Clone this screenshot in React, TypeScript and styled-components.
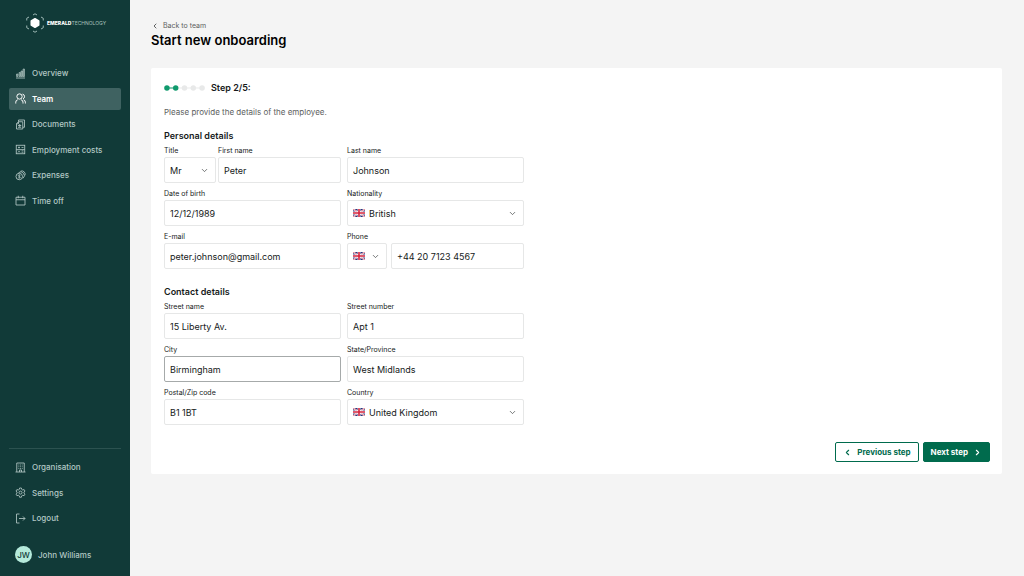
import React, { useId, useState } from "react";
import styled, { createGlobalStyle, css } from "styled-components";
import { ChevronDown, ChevronLeft, ChevronRight } from "lucide-react";

const color = {
  sidebar: "#113a38",
  active: "#3f6261",
  sidebarText: "#b3c8c5",
  page: "#f4f4f4",
  ink: "#161a1a",
  muted: "#5d6160",
  line: "#e6e7e7",
  lineFocus: "#a6aaaa",
  green: "#006b4d",
  stepOn: "#119a6d",
  stepOff: "#e8e9e9",
};

const GlobalStyle = createGlobalStyle`
  * { box-sizing: border-box; }
  body {
    margin: 0;
    background: ${color.page};
    color: ${color.ink};
    font-family: Inter, "Liberation Sans", sans-serif;
    font-size: 8px;
  }
  button, input, select { font: inherit; color: inherit; }
`;

const Shell = styled.div`
  display: flex;
  min-height: 100vh;
`;

/* ---------- Sidebar ---------- */

const Sidebar = styled.aside`
  display: flex;
  flex-direction: column;
  flex: none;
  width: 130px;
  padding: 12px 9px;
  background: ${color.sidebar};
  color: ${color.sidebarText};
`;

const Brand = styled.a`
  display: flex;
  align-items: center;
  gap: 2px;
  height: 22px;
  margin: 0 0 28px 16px;
  color: #a9c0bd;
  font-size: 5px;
  line-height: 8px;
  text-decoration: none;

  b { color: #fff; font-weight: 800; }
  svg { flex: none; }
`;

const NavList = styled.ul<{ $height: number }>`
  display: flex;
  flex-direction: column;
  justify-content: space-between;
  min-height: ${(p) => p.$height}px;
  margin: 0;
  padding: 0;
  list-style: none;
`;

const NavLink = styled.a<{ $active?: boolean }>`
  display: flex;
  align-items: center;
  gap: 6px;
  height: 22px;
  padding: 0 6px;
  border-radius: 2px;
  color: inherit;
  font-weight: 500;
  line-height: 12px;
  text-decoration: none;

  ${(p) =>
    p.$active &&
    css`
      background: ${color.active};
      color: #fff;
      font-weight: 600;
    `}
`;

const SidebarFoot = styled.div`
  margin-top: auto;
  padding-top: 7px;
  border-top: 1px solid #2c5250;
`;

const User = styled.div`
  display: flex;
  align-items: center;
  gap: 6px;
  margin: 17px 0 1px;
  padding-left: 6px;
  font-weight: 500;
`;

const Avatar = styled.span`
  display: grid;
  place-items: center;
  width: 17px;
  height: 17px;
  border-radius: 50%;
  background: #b5eadb;
  color: ${color.sidebar};
`;

/* ---------- Page ---------- */

const Main = styled.main`
  flex: 1;
  min-width: 0;
  padding: 20px 22px 24px 21px;
`;

const BackLink = styled.a`
  display: inline-flex;
  align-items: center;
  gap: 4px;
  height: 12px;
  color: ${color.muted};
  font-size: 7px;
  line-height: 12px;
  text-decoration: none;

  svg { color: ${color.ink}; }
`;

const Title = styled.h1`
  margin: 0 0 19px;
  color: #000;
  font-size: 13px;
  font-weight: 600;
  line-height: 17px;
`;

const Card = styled.form`
  padding: 13px 12px 12px 13px;
  border-radius: 2px;
  background: #fff;
`;

const StepBar = styled.div`
  display: flex;
  align-items: center;
  gap: 6px;
  height: 13px;
  font-size: 9px;
  font-weight: 600;
`;

const Intro = styled.p`
  margin: 12px 0;
  color: ${color.muted};
  line-height: 12px;
`;

const Section = styled.fieldset`
  max-width: 360px;
  min-width: 0;
  margin: 0 0 17px;
  padding: 0;
  border: 0;
`;

const Legend = styled.legend`
  height: 16px;
  padding: 0;
  font-size: 9px;
  font-weight: 600;
  line-height: 12px;
`;

const Fields = styled.div`
  display: grid;
  grid-template-columns: 1fr 1fr;
  column-gap: 6px;
  align-content: space-between;
  min-height: 123px;
`;

const Split = styled.div<{ $first: number; $gap: number }>`
  display: grid;
  grid-template-columns: ${(p) => p.$first}px 1fr;
  column-gap: ${(p) => p.$gap}px;
  align-items: end;
`;

const FieldBox = styled.div`
  display: flex;
  flex-direction: column;
  gap: 1px;
  min-width: 0;
`;

const Label = styled.label`
  height: 10px;
  font-size: 7px;
  line-height: 10px;
  white-space: nowrap;
`;

const control = css`
  width: 100%;
  height: 26px;
  padding: 0 5px;
  border: 1px solid ${color.line};
  border-radius: 2px;
  outline: 0;
  background: #fff;
  font-size: 9px;

  &:focus { border-color: ${color.lineFocus}; }
`;

const Input = styled.input<{ $current?: boolean }>`
  ${control}
  ${(p) => p.$current && css`border-color: ${color.lineFocus};`}
`;

const Select = styled.select<{ $flag?: boolean }>`
  ${control}
  display: block;
  appearance: none;
  padding-left: ${(p) => (p.$flag ? 21 : 5)}px;
`;

const SelectBox = styled.div`
  position: relative;
  color: ${color.ink};
`;

const FlagSlot = styled.span`
  position: absolute;
  inset: 0 auto 0 6px;
  display: flex;
  align-items: center;
  pointer-events: none;
`;

const Caret = styled(ChevronDown)`
  position: absolute;
  inset: 0 7px 0 auto;
  margin: auto 0;
  color: #4b4f4f;
  pointer-events: none;
`;

const Actions = styled.div`
  display: flex;
  justify-content: flex-end;
  gap: 4px;
`;

const Button = styled.button<{ $primary?: boolean }>`
  display: flex;
  align-items: center;
  justify-content: center;
  gap: 5px;
  height: 20px;
  padding: 0 7px;
  border: 1px solid ${color.green};
  border-radius: 2px;
  background: ${(p) => (p.$primary ? color.green : "#fff")};
  color: ${(p) => (p.$primary ? "#fff" : color.green)};
  font-weight: 700;
`;

/* ---------- Drawings ---------- */

const Icon = ({ children }: { children: React.ReactNode }) => (
  <svg width="11" height="11" viewBox="0 0 22 22" fill="none" stroke="currentColor" strokeWidth="1.7" aria-hidden>
    {children}
  </svg>
);

const icons = {
  overview: (
    <Icon>
      <path d="M2 20h18" />
      <path d="M3 12h3v5H3zM8 9h3v8H8zM12 6h3v11h-3zM16 2h3v15h-3z" fill="currentColor" fillOpacity=".55" strokeWidth="1.2" />
    </Icon>
  ),
  team: (
    <Icon>
      <g strokeWidth="2">
        <circle cx="9" cy="7" r="5.3" />
        <path d="M1.500 21v-2.500a5 5 0 0 1 4-5M16 21v-2.500a5 5 0 0 0-4-5M15 2.200a5 5 0 0 1 1 9.500M17 13.500a5 5 0 0 1 3.700 4.800V21" />
      </g>
    </Icon>
  ),
  documents: (
    <Icon>
      <path d="M7 5.500V2h12v14.500h-3.500" />
      <path d="M3 9.500l4-4h8.500V20H3zM3 9.500h4v-4M6 13h6.500M6 16.500h6.500M9.500 10v6.500" />
    </Icon>
  ),
  costs: (
    <Icon>
      <rect x="2.500" y="2.500" width="17" height="17" />
      <path d="M6 7h4M8 5v4M13 7h4M6 13l4 4M10 13l-4 4M13 13.500h4M13 16.500h4M2.500 11h17" strokeWidth="1.500" />
    </Icon>
  ),
  expenses: (
    <Icon>
      <circle cx="8.500" cy="13" r="6.500" />
      <path d="M7 5.500a6.500 6.500 0 1 1 9 11M11 2.500a6.500 6.500 0 0 1 9 8" />
      <path d="M11 10.500c-2-1.300-4.800-.5-4.500 1.200.3 1.700 4.300 1 4.300 2.900 0 1.600-2.900 1.900-4.600.6M8.600 8.800v8.400" strokeWidth="1.400" />
    </Icon>
  ),
  timeOff: (
    <Icon>
      <path d="M2 4.500h18V20H2zM2 9.500h18M6.500 1.500v5M15.500 1.500v5" />
    </Icon>
  ),
  organisation: (
    <Icon>
      <path d="M3.500 20V2h15v18M1 20h20M9 20v-4h4v4" />
      <path d="M7 6h1.500M10.300 6h1.500M13.600 6h1.500M7 9.500h1.500M10.300 9.500h1.500M13.600 9.500h1.500M7 13h1.500M10.300 13h1.500M13.600 13h1.500" strokeWidth="1.800" />
    </Icon>
  ),
  settings: (
    <Icon>
      <path
        d="M9.200 2h3.600l.6 2.800 2.100 1.200 2.700-.9 1.800 3.100-2.100 1.900v2.300l2.100 1.900-1.800 3.100-2.700-.9-2.100 1.200-.6 2.800H9.200l-.6-2.800L6.500 16.500l-2.700.9L2 14.300l2.100-1.900v-2.300L2 8.200l1.800-3.100 2.700.9 2.100-1.200z"
        strokeLinejoin="round"
      />
      <circle cx="11" cy="11.200" r="3" />
    </Icon>
  ),
  logout: (
    <Icon>
      <path d="M9 2H3v18h6M8 11h12M16 7l4 4-4 4" />
    </Icon>
  ),
};

const BrandMark = () => (
  <svg width="20" height="20" viewBox="0 0 40 40" aria-hidden>
    <path d="M20 11.500l7.500 4.300v8.400L20 28.500l-7.500-4.300v-8.400z" fill="#fff" stroke="#fff" strokeWidth="3" strokeLinejoin="round" />
    <path
      d="M16 4l4-2.500L24 4M32 8l4.500 2.500V15M36.500 25v4.500L32 32M24 36l-4 2.500L16 36M8 32l-4.500-2.500V25M3.500 15v-4.500L8 8"
      fill="none"
      stroke="#9db8b5"
      strokeWidth="2"
    />
  </svg>
);

const Flag = () => (
  <svg width="12" height="8" viewBox="0 0 60 40" aria-hidden>
    <path d="M0 0h60v40H0z" fill="#29337a" />
    <path d="M0 0l60 40M60 0L0 40" stroke="#fff" strokeWidth="8" />
    <path d="M0 0l60 40M60 0L0 40" stroke="#d4233d" strokeWidth="3" />
    <path d="M30 0v40M0 20h60" stroke="#fff" strokeWidth="14" />
    <path d="M30 0v40M0 20h60" stroke="#d4233d" strokeWidth="8" />
  </svg>
);

const StepDots = ({ current, total }: { current: number; total: number }) => {
  const x = (i: number) => 3 + i * 9;
  return (
    <svg width="41" height="6" viewBox="0 0 42 6" role="img" aria-label={`Step ${current} of ${total}`}>
      <path d={`M3 3H${x(total - 1)}`} stroke={color.stepOff} />
      <path d={`M3 3H${x(current - 1)}`} stroke={color.stepOn} />
      {Array.from({ length: total }, (_, i) => (
        <circle key={i} cx={x(i)} cy="3" r="2.8" fill={i < current ? color.stepOn : color.stepOff} />
      ))}
    </svg>
  );
};

/* ---------- Fields ---------- */

type TextProps = { label: string; value: string; type?: string; current?: boolean };

const TextField = ({ label, value, type = "text", current }: TextProps) => {
  const id = useId();
  const [text, setText] = useState(value);
  return (
    <FieldBox>
      <Label htmlFor={id}>{label}</Label>
      <Input id={id} type={type} value={text} $current={current} onChange={(e) => setText(e.target.value)} />
    </FieldBox>
  );
};

type SelectProps = { label: string; options: string[]; flag?: boolean };

const SelectField = ({ label, options, flag }: SelectProps) => {
  const id = useId();
  return (
    <FieldBox>
      <Label htmlFor={id}>{label}</Label>
      <SelectBox>
        <Select id={id} $flag={flag}>
          {options.map((o) => (
            <option key={o}>{o}</option>
          ))}
        </Select>
        {flag && (
          <FlagSlot>
            <Flag />
          </FlagSlot>
        )}
        <Caret size={9} strokeWidth={2} />
      </SelectBox>
    </FieldBox>
  );
};

const PhoneField = () => {
  const id = useId();
  const [phone, setPhone] = useState("+44 20 7123 4567");
  return (
    <FieldBox>
      <Label htmlFor={id}>Phone</Label>
      <Split $first={40} $gap={4}>
        <SelectBox>
          <Select aria-label="Country code" $flag>
            <option value="GB" aria-label="+44" />
          </Select>
          <FlagSlot>
            <Flag />
          </FlagSlot>
          <Caret size={9} strokeWidth={2} />
        </SelectBox>
        <Input id={id} type="tel" value={phone} onChange={(e) => setPhone(e.target.value)} />
      </Split>
    </FieldBox>
  );
};

type NavEntry = { label: string; icon: React.ReactNode; active?: boolean };

const mainNav: NavEntry[] = [
  { label: "Overview", icon: icons.overview },
  { label: "Team", icon: icons.team, active: true },
  { label: "Documents", icon: icons.documents },
  { label: "Employment costs", icon: icons.costs },
  { label: "Expenses", icon: icons.expenses },
  { label: "Time off", icon: icons.timeOff },
];

const footNav: NavEntry[] = [
  { label: "Organisation", icon: icons.organisation },
  { label: "Settings", icon: icons.settings },
  { label: "Logout", icon: icons.logout },
];

const Nav = ({ items, height }: { items: NavEntry[]; height: number }) => (
  <NavList $height={height}>
    {items.map((item) => (
      <li key={item.label}>
        <NavLink href="#" $active={item.active} aria-current={item.active ? "page" : undefined}>
          {item.icon}
          {item.label}
        </NavLink>
      </li>
    ))}
  </NavList>
);

export default function App() {
  return (
    <>
      <GlobalStyle />
      <Shell>
        <Sidebar>
          <Brand href="#">
            <BrandMark />
            <span>
              <b>EMERALD</b>TECHNOLOGY
            </span>
          </Brand>
          <nav aria-label="Main">
            <Nav items={mainNav} height={150} />
          </nav>
          <SidebarFoot>
            <Nav items={footNav} height={73} />
            <User>
              <Avatar>JW</Avatar>
              John Williams
            </User>
          </SidebarFoot>
        </Sidebar>

        <Main>
          <BackLink href="#">
            <ChevronLeft size={8} />
            Back to team
          </BackLink>
          <Title>Start new onboarding</Title>

          <Card onSubmit={(e) => e.preventDefault()}>
            <StepBar>
              <StepDots current={2} total={5} />
              <span>Step 2/5:</span>
            </StepBar>
            <Intro>Please provide the details of the employee.</Intro>

            <Section>
              <Legend>Personal details</Legend>
              <Fields>
                <Split $first={52} $gap={2}>
                  <SelectField label="Title" options={["Mr", "Mrs", "Ms"]} />
                  <TextField label="First name" value="Peter" />
                </Split>
                <TextField label="Last name" value="Johnson" />
                <TextField label="Date of birth" value="12/12/1989" />
                <SelectField label="Nationality" options={["British"]} flag />
                <TextField label="E-mail" type="email" value="peter.johnson@gmail.com" />
                <PhoneField />
              </Fields>
            </Section>

            <Section>
              <Legend>Contact details</Legend>
              <Fields>
                <TextField label="Street name" value="15 Liberty Av." />
                <TextField label="Street number" value="Apt 1" />
                <TextField label="City" value="Birmingham" current />
                <TextField label="State/Province" value="West Midlands" />
                <TextField label="Postal/Zip code" value="B1 1BT" />
                <SelectField label="Country" options={["United Kingdom"]} flag />
              </Fields>
            </Section>

            <Actions>
              <Button type="button">
                <ChevronLeft size={9} strokeWidth={3} />
                Previous step
              </Button>
              <Button type="submit" $primary>
                Next step
                <ChevronRight size={9} strokeWidth={3} />
              </Button>
            </Actions>
          </Card>
        </Main>
      </Shell>
    </>
  );
}
